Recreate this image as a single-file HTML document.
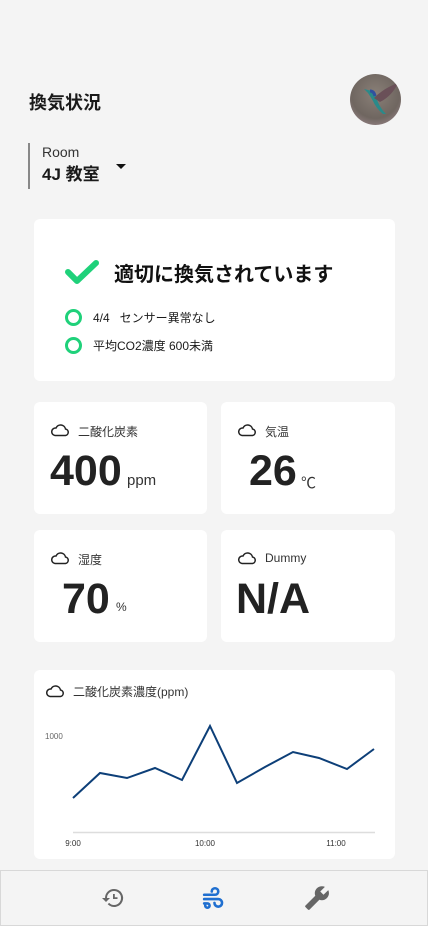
<!DOCTYPE html>
<html><head><meta charset="utf-8"><style>
*{margin:0;padding:0;box-sizing:border-box}
body{width:428px;height:926px;background:#f4f4f4;font-family:"Liberation Sans","Noto Sans CJK JP",sans-serif;color:#1a1a1a;position:relative;overflow:hidden}
.abs{position:absolute}
.card{position:absolute;background:#fff;border-radius:6px}
.lbl{position:absolute;font-size:12px;color:#333;top:21px;left:44px}
.cloud{position:absolute;left:16px;top:21px}
.big{position:absolute;font-weight:bold;font-size:43px;color:#222;top:45px}
.unit{position:absolute;font-size:15px;color:#333}
</style></head><body>
<div class="abs" style="left:29px;top:89px;font-size:18px;font-weight:bold">換気状況</div>
<div class="abs" style="left:350px;top:74px;width:51px;height:51px;border-radius:50%;background:radial-gradient(circle at 50% 40%,#8a8078,#6f6660 60%,#a89098);overflow:hidden">
<svg width="51" height="51" viewBox="0 0 51 51"><path d="M14 15 L22 17 Q26 20 27 26 Q30 34 36 40 L33 40 Q26 34 23 27 Q20 22 18 19Z" fill="#2a8a8a"/><path d="M24 24 Q34 14 48 9 Q42 22 30 28Z" fill="#6a5058"/><path d="M20 17 Q24 17 25 22" stroke="#3050a0" stroke-width="3" fill="none"/></svg></div>
<div class="abs" style="left:28px;top:143px;width:2px;height:46px;background:#888"></div>
<div class="abs" style="left:42px;top:144px;font-size:14px;color:#333">Room</div>
<div class="abs" style="left:42px;top:163px;font-size:17px;font-weight:bold;line-height:24px">4J 教室</div>
<div class="abs" style="left:116px;top:164px;width:0;height:0;border-left:5px solid transparent;border-right:5px solid transparent;border-top:5px solid #111"></div>

<div class="card" style="left:34px;top:219px;width:361px;height:162px">
<svg class="abs" style="left:31px;top:40px" width="34" height="26" viewBox="0 0 34 26"><path d="M3 13 L12 22 L31 4" stroke="#1fd17a" stroke-width="6" fill="none" stroke-linecap="round" stroke-linejoin="round"/></svg>
<div class="abs" style="left:80px;top:39px;font-size:20px;font-weight:bold;color:#111">適切に換気されています</div>
<div class="abs" style="left:31px;top:90px;width:17px;height:17px;border:3px solid #1fd17a;border-radius:50%"></div>
<div class="abs" style="left:59px;top:90px;font-size:12px">4/4 &nbsp; センサー異常なし</div>
<div class="abs" style="left:31px;top:118px;width:17px;height:17px;border:3px solid #1fd17a;border-radius:50%"></div>
<div class="abs" style="left:59px;top:118px;font-size:12px">平均CO2濃度 600未満</div>
</div>

<svg width="0" height="0" style="position:absolute"><defs><symbol id="cl" viewBox="0 0 20 14"><path d="M5 12.5 H15.5 A3.3 3.3 0 0 0 15.5 6 A5 5 0 0 0 6 5 A3.7 3.7 0 0 0 5 12.5Z" fill="none" stroke="#222" stroke-width="1.5"/></symbol></defs></svg>

<div class="card" style="left:34px;top:402px;width:173px;height:112px">
<svg class="cloud" width="20" height="14"><use href="#cl"/></svg>
<div class="lbl">二酸化炭素</div>
<div class="big" style="left:16px">400</div>
<div class="unit" style="left:93px;top:70px">ppm</div></div>
<div class="card" style="left:221px;top:402px;width:174px;height:112px">
<svg class="cloud" width="20" height="14"><use href="#cl"/></svg>
<div class="lbl">気温</div>
<div class="big" style="left:28px">26</div>
<div class="unit" style="left:80px;top:70px">℃</div></div>
<div class="card" style="left:34px;top:530px;width:173px;height:112px">
<svg class="cloud" width="20" height="14"><use href="#cl"/></svg>
<div class="lbl">湿度</div>
<div class="big" style="left:28px">70</div>
<div class="unit" style="left:82px;top:70px;font-size:12px">%</div></div>
<div class="card" style="left:221px;top:530px;width:174px;height:112px">
<svg class="cloud" width="20" height="14"><use href="#cl"/></svg>
<div class="lbl">Dummy</div>
<div class="big" style="left:15px">N/A</div></div>

<div class="card" style="left:34px;top:670px;width:361px;height:189px">
<svg class="abs" style="left:11px;top:14px" width="20" height="14"><use href="#cl"/></svg>
<div class="abs" style="left:39px;top:13px;font-size:12px;color:#333">二酸化炭素濃度(ppm)</div>
</div>
<svg class="abs" style="left:0;top:0" width="428" height="926">
<text x="45" y="739" font-size="8" fill="#666" font-family="Liberation Sans">1000</text>
<line x1="73" y1="832.5" x2="375" y2="832.5" stroke="#ddd" stroke-width="1.5"/>
<polyline points="73,798 100,773 127,778 155,768 182,780 210,726 237,783 265,767 293,752 319,758 347,769 374,749" fill="none" stroke="#0d3f78" stroke-width="2"/>
<text x="73" y="846" font-size="8" fill="#333" text-anchor="middle" font-family="Liberation Sans">9:00</text>
<text x="205" y="846" font-size="8" fill="#333" text-anchor="middle" font-family="Liberation Sans">10:00</text>
<text x="336" y="846" font-size="8" fill="#333" text-anchor="middle" font-family="Liberation Sans">11:00</text>
</svg>

<div class="abs" style="left:0;top:870px;width:428px;height:56px;border:1px solid #d8d8d8;background:#f4f4f4">
<svg class="abs" style="left:99px;top:15px" width="26" height="24" viewBox="0 0 24 24"><path d="M13 3a9 9 0 0 0-9 9H1l4 4 4-4H6a7 7 0 1 1 7 7 6.9 6.9 0 0 1-4.9-2.1l-1.4 1.4A9 9 0 1 0 13 3z" fill="#666"/><path d="M12 8v5h4.5v-1.7H13.8V8z" fill="#666"/></svg>
<svg class="abs" style="left:201px;top:14px" width="26" height="26" viewBox="0 0 24 24"><g fill="none" stroke="#1f6fd0" stroke-width="2.4" stroke-linecap="round"><path d="M2 9h10a3 3 0 1 0-3-3"/><path d="M2 13h13a3.5 3.5 0 1 1-3.5 3.5"/><path d="M2 17h3a2 2 0 1 1-2 2"/></g></svg>
<svg class="abs" style="left:303px;top:14px" width="26" height="26" viewBox="0 0 24 24"><path d="M22.7 19l-9.1-9.1c.9-2.3.4-5-1.5-6.9-2-2-5-2.4-7.4-1.3L9 6 6 9 1.6 4.7C.4 7.1.9 10.1 2.9 12.1c1.9 1.9 4.6 2.4 6.9 1.5l9.1 9.1c.4.4 1 .4 1.4 0l2.3-2.3c.5-.4.5-1.1.1-1.4z" fill="#666" transform="scale(-1,1) translate(-24,0)"/></svg>
</div>
</body></html>
